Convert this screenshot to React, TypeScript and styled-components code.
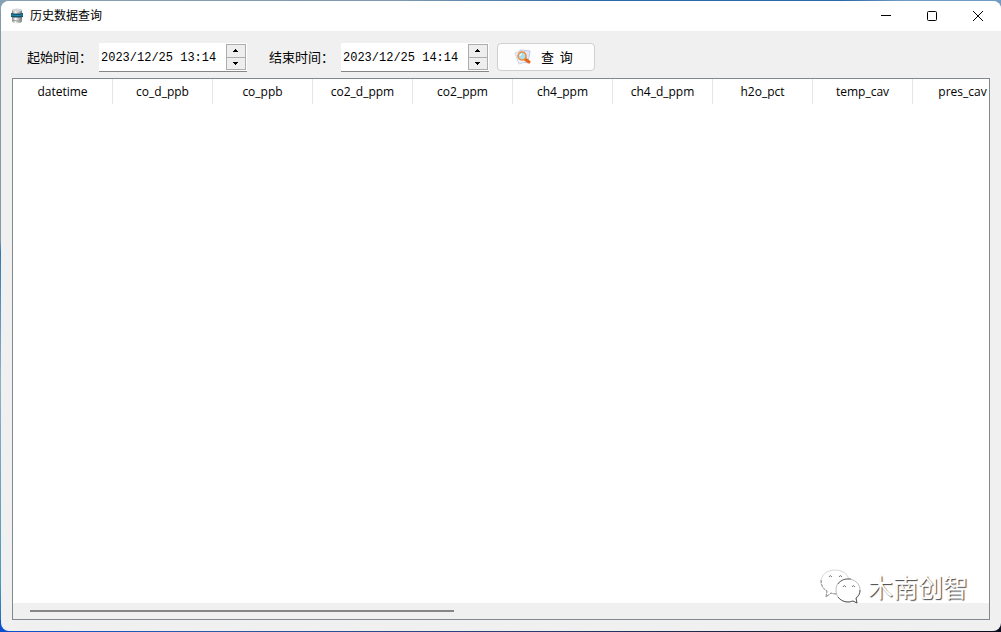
import React from "react";
import styled, { createGlobalStyle } from "styled-components";

const GlobalStyle = createGlobalStyle`
  *, *::before, *::after { box-sizing: border-box; }
  html, body, #root { height: 100%; }
  body {
    margin: 0;
    overflow: hidden;
    font-family: "Open Sans", "Noto Sans CJK SC", sans-serif;
    color: #000;
  }
  button, input { font: inherit; color: inherit; margin: 0; }
`;

const Desktop = styled.div`
  height: 100%;
  padding: 1px 0 1px 1px;
  background:
    linear-gradient(90deg, #0a4fd0, #2c5aa8 20%, #2b3f78 50%, #1c2540 75%, #0a0c1c) bottom / 100% 12px no-repeat,
    linear-gradient(90deg, #86a0b4 0%, #7f9ab0 40%, #2c68a8 60%, #2c68a8 84%, #6f9cc4 90%) top / 100% 12px no-repeat,
    linear-gradient(#8399ac, #8399ac 38%, #2f78b4 40%, #8fb0c4 60%, #4a9ab8 92%, #1c5cc8);
`;

const AppWindow = styled.main`
  height: 100%;
  display: flex;
  flex-direction: column;
  background: #f0f0f0;
  border-radius: 8px;
  overflow: hidden;
`;

const TitleBar = styled.header`
  height: 30px;
  flex: none;
  display: flex;
  align-items: center;
  padding-left: 8px;
  background: #fff;
`;

const Title = styled.h1`
  flex: 1;
  margin: 0 0 0 5px;
  font-size: 12px;
  line-height: 16px;
  font-weight: 400;
`;

const CaptionButton = styled.button`
  width: 46px;
  height: 28px;
  padding: 0;
  display: grid;
  place-items: center;
  border: 0;
  background: transparent;
`;

const Toolbar = styled.form`
  flex: none;
  display: flex;
  align-items: flex-start;
  height: 29px;
  margin: 12px 12px 6px 26px;
`;

const FieldLabel = styled.label`
  width: 72px;
  font: 13px/28px "Noto Sans CJK SC", sans-serif;
  white-space: nowrap;
`;

const SpinBox = styled.div`
  width: 148px;
  height: 29px;
  display: flex;
  margin-right: 22px;
  padding: 1px;
  background: #fff;
  border-bottom: 1px solid #868686;

  &:last-of-type { margin-right: 8px; }
`;

const DateInput = styled.input`
  flex: 1;
  min-width: 0;
  padding: 2px 0 0 1px;
  border: 0;
  outline: 0;
  background: transparent;
  font: 12px/16px "Liberation Mono", monospace;
`;

const Steps = styled.div`
  width: 20px;
  display: flex;
  flex-direction: column;
`;

const StepButton = styled.button`
  flex: 1;
  padding: 0;
  display: grid;
  place-items: center;
  border: 1px solid #adadad;
  background: #eee;

  & + & { border-top: 0; }
`;

const QueryButton = styled.button`
  width: 98px;
  height: 28px;
  display: flex;
  align-items: center;
  gap: 9px;
  padding: 0 0 0 16px;
  border: 1px solid #d0d0d0;
  border-radius: 4px;
  background: #fdfdfd;
  font: 13px/16px "Noto Sans CJK SC", sans-serif;
  white-space: pre;
`;

const ResultPanel = styled.section`
  position: relative;
  flex: 1;
  min-height: 0;
  display: flex;
  flex-direction: column;
  margin: 0 11px;
  border: 1px solid #828790;
  background: #fff;
`;

const TableViewport = styled.div`
  flex: 1;
  overflow: hidden;
`;

const DataTable = styled.table`
  width: 1000px;
  table-layout: fixed;
  border-collapse: separate;
  border-spacing: 0;
`;

const ColumnHead = styled.th`
  height: 25px;
  padding: 0;
  border-right: 1px solid #e5e5e5;
  font-size: 12px;
  line-height: 16px;
  font-weight: 400;
  text-align: center;
`;

const ScrollTrack = styled.div`
  flex: none;
  height: 16px;
  padding: 7px 17px;
  background: #f0f0f0;
`;

const ScrollThumb = styled.div`
  width: 45%;
  height: 2px;
  background: #868686;
`;

const StatusSpace = styled.footer`
  flex: none;
  height: 11px;
`;

const Watermark = styled.div`
  position: absolute;
  right: 21px;
  bottom: 15px;
  display: flex;
  align-items: center;
  gap: 6px;
  color: #fff;
  font: 25px/36px "Noto Sans CJK SC", sans-serif;
  text-shadow: 1px 1px 1px #444;
`;

const DatabaseIcon = () => (
  <svg width="16" height="16" viewBox="0 0 16 16" aria-hidden="true">
    <defs>
      <linearGradient id="metal">
        <stop offset="0" stopColor="#888" />
        <stop offset=".35" stopColor="#fafafa" />
        <stop offset=".65" stopColor="#bbb" />
        <stop offset="1" stopColor="#777" />
      </linearGradient>
    </defs>
    <path d="M3 2v11c0 3 10 3 10 0V2z" fill="url(#metal)" />
    <ellipse cx="8" cy="2" rx="5" ry="1.500" fill="#d4d6d7" />
    <path d="M2 5q6 1 12 0v4q-6 1-12 0z" fill="#1b4f66" />
    <path d="M2 7q6 1 12 0" stroke="#1b93b8" fill="none" />
    <path d="M3 12q5 2 10 0" stroke="#999" fill="none" />
  </svg>
);

const SearchIcon = () => (
  <svg width="18" height="18" viewBox="0 0 18 18" aria-hidden="true">
    <path d="M6 2l10 1-2 12-10-2z" fill="#e4e9f8" stroke="#bfc8e4" />
    <path d="M1 5l9-3 4 11-9 3z" fill="#f1f3fc" stroke="#cdd4ea" />
    <path d="M11 11l4 3" stroke="#e8641b" strokeWidth="3" strokeLinecap="round" />
    <circle cx="8" cy="8" r="4" fill="#a9e0ee" stroke="#f08a32" strokeWidth="1.500" />
    <path d="M6 8q0-2 2-2" stroke="#fff" fill="none" />
  </svg>
);

const Arrow = ({ down = false }: { down?: boolean }) => (
  <svg width="6" height="3" viewBox="0 0 6 3" shapeRendering="crispEdges" aria-hidden="true">
    <path d={down ? "M0 0h5v1H4v1H3v1H2V2H1V1H0z" : "M2 0h1v1h1v1h1v1H0V2h1V1h1z"} />
  </svg>
);

const ChatIcon = () => (
  <svg width="42" height="36" viewBox="0 0 42 36" aria-hidden="true">
    <g fill="#fff" strokeLinejoin="round" strokeWidth=".8">
      <path
        d="M17 26q-3 0-6-1l-5 4 1-6C3 21 1 18 1 14 1 7 7 2 15 2c7 0 13 4 14 10"
        stroke="#ccc"
      />
      <path d="M1 12c0 5 2 9 6 11l-1 6 5-4q3 1 6 1" stroke="#777" fill="none" strokeDasharray="3 1" />
      <path
        d="M28 11c7 0 12 5 12 11 0 3-1 6-4 8l1 5-4-2q-3 1-5 1c-7 0-12-5-12-12s5-11 12-11z"
        stroke="#aaa"
      />
      <path d="M40 22c0 3-1 6-4 8l1 5-4-2q-3 1-5 1c-4 0-8-2-10-5" stroke="#444" fill="none" />
      <path d="M18 16q4-6 13-5" stroke="#555" fill="none" />
    </g>
    <g fill="none" stroke="#777">
      <path d="M9 9q1-3 3 0M19 9q1-3 3 0M23 19q1-3 3 0M32 19q1-3 3 0" />
    </g>
  </svg>
);

const columns = [
  "datetime", "co_d_ppb", "co_ppb", "co2_d_ppm", "co2_ppm",
  "ch4_ppm", "ch4_d_ppm", "h2o_pct", "temp_cav", "pres_cav",
];

function DateField({ id, label, value }: { id: string; label: string; value: string }) {
  return (
    <>
      <FieldLabel htmlFor={id}>{label}</FieldLabel>
      <SpinBox>
        <DateInput id={id} type="text" defaultValue={value} />
        <Steps>
          <StepButton type="button" aria-label="增加"><Arrow /></StepButton>
          <StepButton type="button" aria-label="减少"><Arrow down /></StepButton>
        </Steps>
      </SpinBox>
    </>
  );
}

export default function App() {
  return (
    <>
      <GlobalStyle />
      <Desktop>
        <AppWindow>
          <TitleBar>
            <DatabaseIcon />
            <Title>历史数据查询</Title>
            <CaptionButton aria-label="最小化">
              <svg width="10" height="10"><path d="M0 4.500h10" stroke="#000" /></svg>
            </CaptionButton>
            <CaptionButton aria-label="最大化">
              <svg width="10" height="10"><rect x=".5" y=".5" width="9" height="9" rx="1" fill="none" stroke="#000" /></svg>
            </CaptionButton>
            <CaptionButton aria-label="关闭">
              <svg width="10" height="10"><path d="M0 0l10 10M10 0L0 10" stroke="#000" /></svg>
            </CaptionButton>
          </TitleBar>
          <Toolbar onSubmit={(e) => e.preventDefault()}>
            <DateField id="start" label="起始时间：" value="2023/12/25 13:14" />
            <DateField id="end" label="结束时间：" value="2023/12/25 14:14" />
            <QueryButton type="submit"><SearchIcon />{"查  询"}</QueryButton>
          </Toolbar>
          <ResultPanel>
            <TableViewport>
              <DataTable>
                <thead>
                  <tr>{columns.map((name) => <ColumnHead key={name} scope="col">{name}</ColumnHead>)}</tr>
                </thead>
              </DataTable>
            </TableViewport>
            <ScrollTrack><ScrollThumb /></ScrollTrack>
            <Watermark><ChatIcon />木南创智</Watermark>
          </ResultPanel>
          <StatusSpace />
        </AppWindow>
      </Desktop>
    </>
  );
}
